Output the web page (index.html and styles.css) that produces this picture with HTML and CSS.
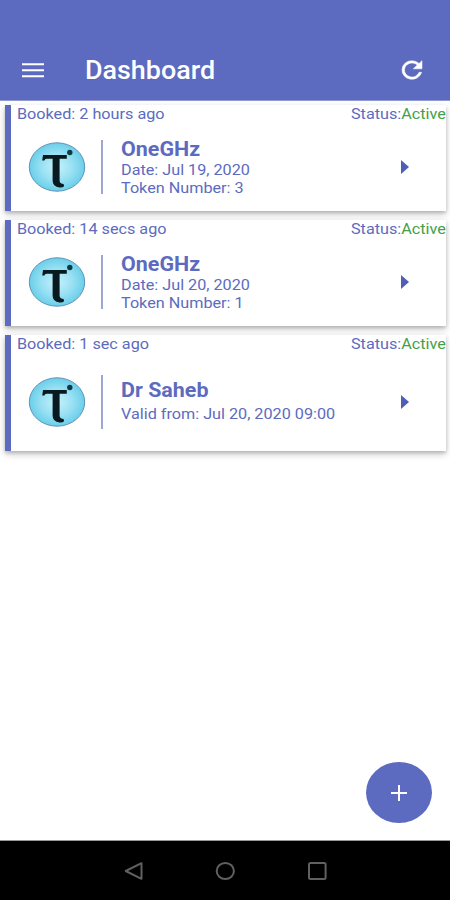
FILE: index.html
```html
<!DOCTYPE html>
<html lang="en">
<head>
    <meta charset="utf-8">
    <title>Dashboard</title>
    <link rel="stylesheet" href="styles.css">
</head>
<body>
    <svg width="0" height="0" class="defs">
        <defs>
            <radialGradient id="logoFill" cx="50%" cy="50%" r="52%">
                <stop offset="0" stop-color="#c8f1fb"/>
                <stop offset="0.55" stop-color="#98e0f3"/>
                <stop offset="1" stop-color="#66cde8"/>
            </radialGradient>
            <symbol id="logo" viewBox="0 0 58 52">
                <ellipse cx="29" cy="26" rx="27.7" ry="24.2" fill="url(#logoFill)" stroke="#5f93b8" stroke-width="1"/>
                <path d="M15 14H38.8V17.8H31.6V39.5Q31.6 42.6 34.5 42.8Q36.6 43 36 45.2Q35 46.6 31.5 46.4Q24.6 46 24.6 39.5V17.8H18.5Q16.8 17.9 16.4 19.6H14.2Z" fill="#08191f"/>
                <circle cx="41.8" cy="11.5" r="2.7" fill="#103945"/>
            </symbol>
        </defs>
    </svg>

    <div class="header">
        <svg class="menu" width="24" height="16" viewBox="0 0 24 16">
            <path d="M1 2.3H23M1 8.3H23M1 14.3H23" stroke="#fff" stroke-width="1.9"/>
        </svg>
        <h1>Dashboard</h1>
        <svg class="refresh" width="30" height="28" viewBox="0 0 24 24" preserveAspectRatio="none">
            <path fill="#fff" stroke="#fff" stroke-width="0.4" d="M17.65 6.35A7.96 7.96 0 0 0 12 4a8 8 0 1 0 7.73 10h-2.08A6 6 0 1 1 12 6c1.66 0 3.14.69 4.22 1.78L13 11h7V4z"/>
        </svg>
    </div>

    <div class="list">
        <div class="card">
            <div class="top">
                <span class="booked">Booked: 2 hours ago</span>
                <span class="status">Status:<b>Active</b></span>
            </div>
            <div class="row">
                <svg class="logo"><use href="#logo"/></svg>
                <div class="info">
                    <h2>OneGHz</h2>
                    <p>Date: Jul 19, 2020</p>
                    <p>Token Number: 3</p>
                </div>
                <div class="arrow"></div>
            </div>
        </div>
        <div class="card">
            <div class="top">
                <span class="booked">Booked: 14 secs ago</span>
                <span class="status">Status:<b>Active</b></span>
            </div>
            <div class="row">
                <svg class="logo"><use href="#logo"/></svg>
                <div class="info">
                    <h2>OneGHz</h2>
                    <p>Date: Jul 20, 2020</p>
                    <p>Token Number: 1</p>
                </div>
                <div class="arrow"></div>
            </div>
        </div>
        <div class="card tall">
            <div class="top">
                <span class="booked">Booked: 1 sec ago</span>
                <span class="status">Status:<b>Active</b></span>
            </div>
            <div class="row">
                <svg class="logo"><use href="#logo"/></svg>
                <div class="info">
                    <h2>Dr Saheb</h2>
                    <p>Valid from: Jul 20, 2020 09:00</p>
                </div>
                <div class="arrow"></div>
            </div>
        </div>
    </div>

    <div class="fab">
        <svg width="18" height="18" viewBox="0 0 18 18">
            <path d="M9 1V17M1 9H17" stroke="#fff" stroke-width="2"/>
        </svg>
    </div>

    <div class="navbar">
        <svg width="20" height="20" viewBox="0 0 20 20"><path d="M18.5 2.2V17.8L2.7 10Z"/></svg>
        <svg width="20" height="20" viewBox="0 0 20 20"><ellipse cx="10.3" cy="10" rx="8.6" ry="8"/></svg>
        <svg width="20" height="20" viewBox="0 0 20 20"><rect x="2" y="2" width="16.6" height="16" rx="1.5"/></svg>
    </div>
</body>
</html>
```
FILE: styles.css
```css
body {
    margin: 0;
    height: 900px;
    display: flex;
    flex-direction: column;
    background: #fff;
    color: #5c6bc0;
    font-family: Roboto, "Liberation Sans", sans-serif;
    overflow: hidden;
}
h1, h2, p {
    margin: 0;
}
.defs {
    position: absolute;
}
.header {
    height: 60px;
    padding: 40px 23px 0 21px;
    display: flex;
    align-items: center;
    background: #5c6bc0;
    border-bottom: 1px solid #8f99d3;
    color: #fff;
}
.header h1 {
    margin-left: 40px;
    padding-top: 1px;
    flex: 1;
    font-size: 25px;
    font-weight: 500;
    line-height: 30px;
    transform: scaleX(1.075);
    transform-origin: left;
}
.list {
    flex: 1;
    padding: 4px 4px 0 5px;
    display: flex;
    flex-direction: column;
    gap: 9px;
}
.card {
    height: 106px;
    box-sizing: border-box;
    border-left: 6px solid #5c6bc0;
    background: #fff;
    box-shadow: 0 2px 3px rgba(0, 0, 0, 0.14), 0 3px 7px rgba(0, 0, 0, 0.22);
}
.card.tall {
    height: 116px;
}
.top {
    height: 18px;
    padding-left: 6px;
    display: flex;
    justify-content: space-between;
    font-size: 15px;
    line-height: 18px;
}
.booked {
    transform: scaleX(1.08);
    transform-origin: left;
}
.status {
    transform: scaleX(1.08);
    transform-origin: right;
}
.status b {
    font-weight: 400;
    color: #43a047;
}
.row {
    height: 88px;
    display: flex;
    align-items: center;
}
.tall .row {
    height: 97px;
}
.logo {
    width: 58px;
    height: 52px;
    margin-left: 17px;
}
.info {
    height: 54px;
    margin-left: 15px;
    padding-left: 18px;
    border-left: 2px solid #9da6d9;
    flex: 1;
    display: flex;
    flex-direction: column;
    align-items: flex-start;
    justify-content: center;
}
.info h2 {
    margin-top: 1px;
    font-size: 19.5px;
    font-weight: 700;
    line-height: 24px;
    transform: scaleX(1.1);
    transform-origin: left;
}
.info p {
    font-size: 14.5px;
    line-height: 17.5px;
    transform: scaleX(1.117);
    transform-origin: left;
}
.tall .info h2 {
    margin-top: -1px;
}
.tall .info p {
    margin-top: 3px;
}
.arrow {
    margin-right: 37px;
    border-left: 8px solid #4f5fb8;
    border-top: 7px solid transparent;
    border-bottom: 7px solid transparent;
}
.fab {
    position: absolute;
    left: 366px;
    top: 762px;
    width: 66px;
    height: 61px;
    border-radius: 50%;
    background: #5c6bc0;
    display: flex;
    align-items: center;
    justify-content: center;
}
.navbar {
    height: 60px;
    background: #000;
    border-top: 1px solid #999;
    box-sizing: border-box;
    display: flex;
    align-items: center;
    justify-content: center;
    gap: 72px;
}
.navbar svg {
    fill: none;
    stroke: #606060;
    stroke-width: 2;
    stroke-linejoin: round;
}
```
